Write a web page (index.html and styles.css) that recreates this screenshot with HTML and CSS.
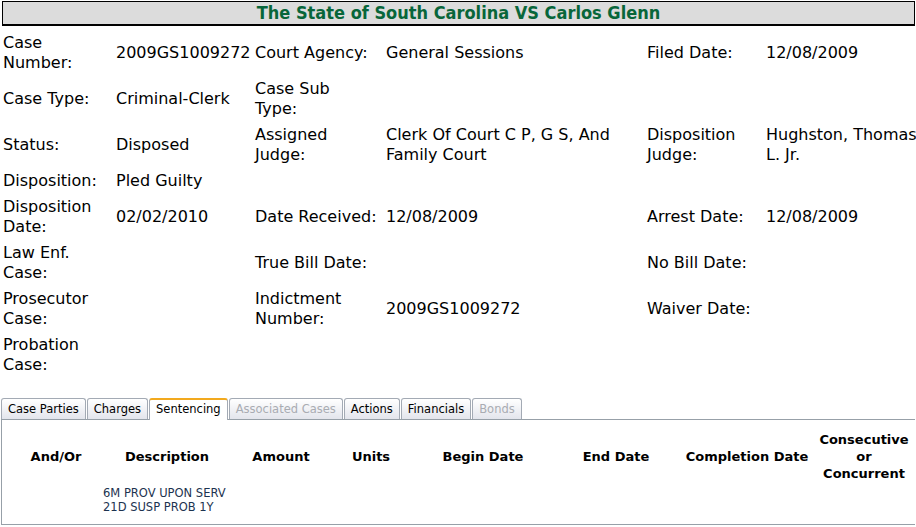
FILE: index.html
```html
<!DOCTYPE html>
<html lang="en">
<head>
    <meta charset="UTF-8">
    <title>Case Details</title>
    <link rel="stylesheet" href="styles.css">
</head>
<body>
    <div class="case-title">The State of South Carolina VS Carlos Glenn</div>

    <table class="details">
        <colgroup>
            <col class="c-l1"><col class="c-v1"><col class="c-l2"><col class="c-v2"><col class="c-l3"><col class="c-v3">
        </colgroup>
        <tr>
            <td>Case Number:</td><td>2009GS1009272</td>
            <td>Court Agency:</td><td>General Sessions</td>
            <td>Filed Date:</td><td>12/08/2009</td>
        </tr>
        <tr>
            <td>Case Type:</td><td>Criminal-Clerk</td>
            <td>Case Sub<br>Type:</td><td></td>
            <td></td><td></td>
        </tr>
        <tr>
            <td>Status:</td><td>Disposed</td>
            <td>Assigned Judge:</td><td>Clerk Of Court C P, G S, And Family Court</td>
            <td>Disposition Judge:</td><td>Hughston, Thomas L. Jr.</td>
        </tr>
        <tr>
            <td>Disposition:</td><td>Pled Guilty</td>
            <td></td><td></td><td></td><td></td>
        </tr>
        <tr>
            <td>Disposition Date:</td><td>02/02/2010</td>
            <td>Date Received:</td><td>12/08/2009</td>
            <td>Arrest Date:</td><td>12/08/2009</td>
        </tr>
        <tr>
            <td>Law Enf. Case:</td><td></td>
            <td>True Bill Date:</td><td></td>
            <td>No Bill Date:</td><td></td>
        </tr>
        <tr>
            <td>Prosecutor Case:</td><td></td>
            <td>Indictment Number:</td><td>2009GS1009272</td>
            <td>Waiver Date:</td><td></td>
        </tr>
        <tr>
            <td>Probation Case:</td><td></td>
            <td></td><td></td><td></td><td></td>
        </tr>
    </table>

    <ul class="tabs">
        <li>Case Parties</li>
        <li>Charges</li>
        <li class="active">Sentencing</li>
        <li class="disabled">Associated Cases</li>
        <li>Actions</li>
        <li>Financials</li>
        <li class="disabled">Bonds</li>
    </ul>

    <div class="panel">
        <table class="sentencing">
            <colgroup>
                <col class="s-andor"><col class="s-desc"><col class="s-amount"><col class="s-units">
                <col class="s-begin"><col class="s-end"><col class="s-comp"><col class="s-cons">
            </colgroup>
            <tr>
                <th>And/Or</th>
                <th>Description</th>
                <th>Amount</th>
                <th>Units</th>
                <th>Begin Date</th>
                <th>End Date</th>
                <th>Completion Date</th>
                <th>Consecutive or Concurrent</th>
            </tr>
            <tr class="data">
                <td></td>
                <td>6M PROV UPON SERV<br>21D SUSP PROB 1Y</td>
                <td></td><td></td><td></td><td></td><td></td><td></td>
            </tr>
        </table>
    </div>
</body>
</html>
```

FILE: styles.css
```css
html, body {
    overflow: hidden;
}

body {
    margin: 0;
    font-family: "DejaVu Sans", Verdana, sans-serif;
    color: #000;
    background: #fff;
}

.case-title {
    margin: 1px 1px 0 2px;
    height: 22px;
    line-height: 22px;
    border: 1px solid #000;
    border-bottom-width: 2px;
    background: #dcdcdc;
    text-align: center;
    font-family: "Liberation Sans Narrow", "DejaVu Sans Condensed", sans-serif;
    font-stretch: condensed;
    font-weight: bold;
    font-size: 18px;
    color: #08663a;
}

.details {
    margin-top: 4px;
    width: 920px;
    table-layout: fixed;
    border-collapse: collapse;
    font-size: 16px;
    line-height: 20px;
}

.details td {
    padding: 3px;
    vertical-align: middle;
}

.c-l1 { width: 113px; }
.c-v1 { width: 139px; }
.c-l2 { width: 131px; }
.c-v2 { width: 261px; }
.c-l3 { width: 119px; }
.c-v3 { width: 157px; }

.tabs {
    display: flex;
    list-style: none;
    margin: 20px 0 0 1px;
    padding: 0;
    position: relative;
    z-index: 1;
}

.tabs li {
    margin-right: 1px;
    padding: 3px 6px 2px;
    height: 15px;
    line-height: 15px;
    font-size: 11.5px;
    border: 1px solid #a3aab4;
    border-bottom: none;
    border-radius: 3px 3px 0 0;
    background: linear-gradient(#ffffff, #e3e5ec);
    color: #000;
}

.tabs li.active {
    background: #fff;
    border-top: 2px solid #f2a91e;
    padding-top: 2px;
    height: 16px;
    margin-bottom: -1px;
}

.tabs li.disabled {
    color: #a9acb2;
}

.panel {
    margin: 0 1px 0 1px;
    border: 1px solid #97a0a8;
    border-right: none;
    padding: 11px 0 10px 7px;
}

.sentencing {
    table-layout: fixed;
    border-collapse: collapse;
    width: 902px;
}

.s-andor { width: 94px; }
.s-desc { width: 128px; }
.s-amount { width: 100px; }
.s-units { width: 80px; }
.s-begin { width: 144px; }
.s-end { width: 122px; }
.s-comp { width: 140px; }
.s-cons { width: 94px; }

.sentencing th {
    padding: 0;
    font-size: 13px;
    line-height: 17px;
    font-weight: bold;
    text-align: center;
    vertical-align: middle;
}

.sentencing .data td {
    padding: 4px 0 0;
    font-size: 11.5px;
    line-height: 14px;
    color: #1c3350;
    vertical-align: top;
}
```
